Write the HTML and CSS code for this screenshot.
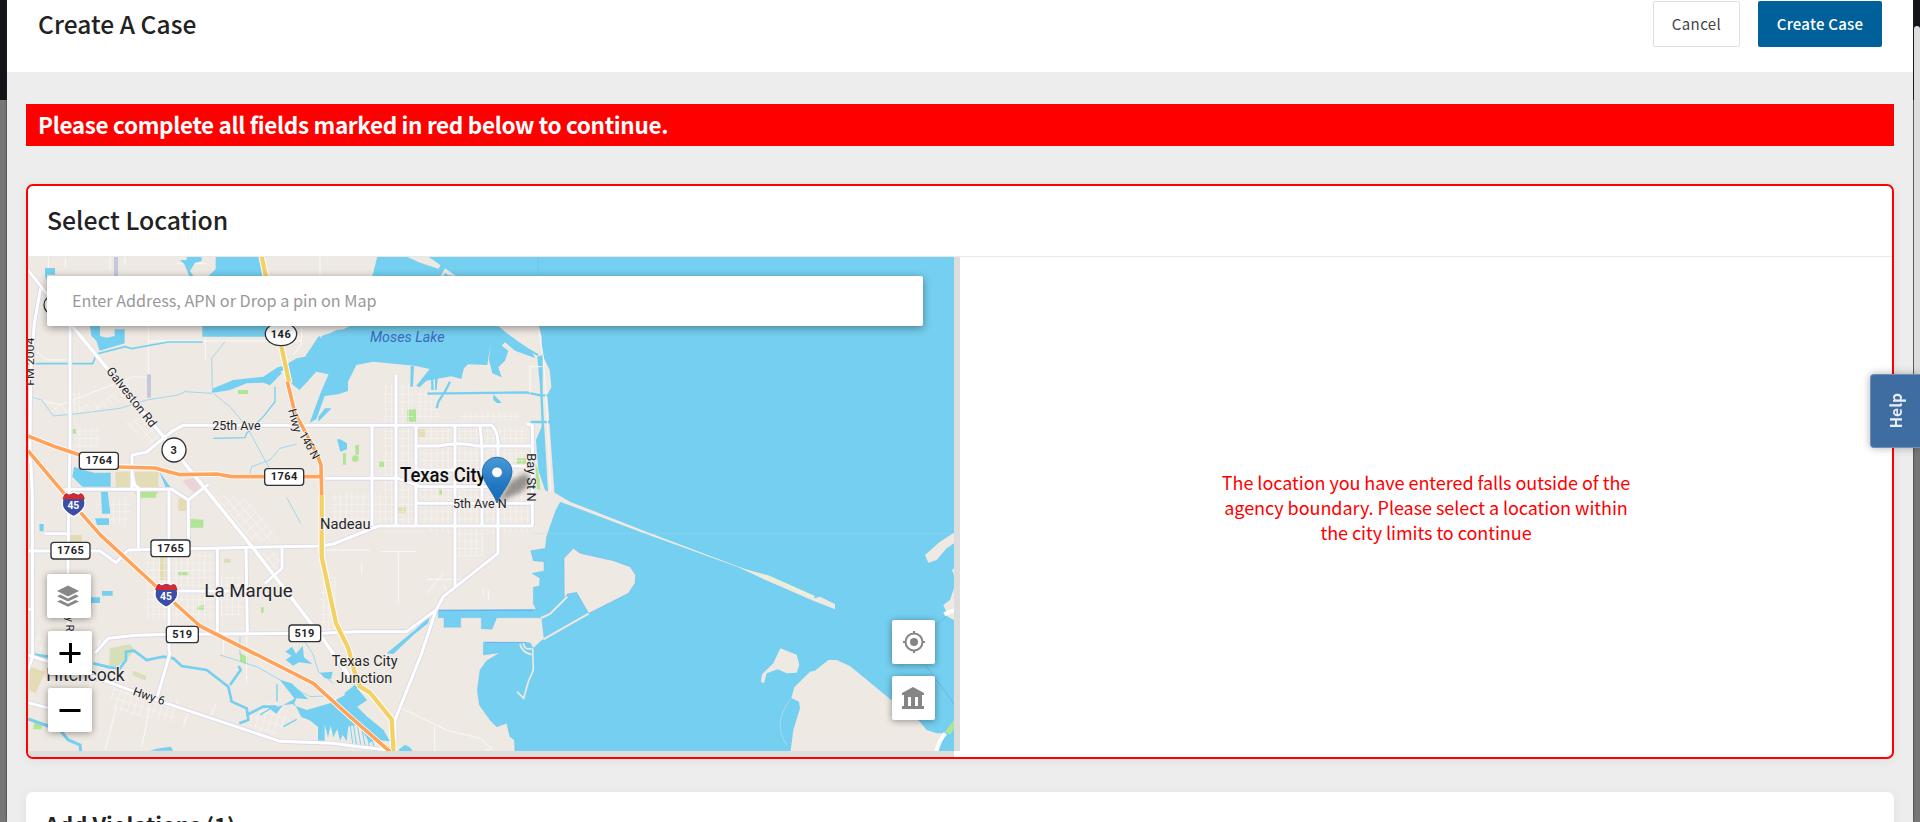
FILE: index.html
```html
<!DOCTYPE html>
<html lang="en">
<head>
<meta charset="utf-8">
<title>Create A Case</title>
<link rel="stylesheet" href="styles.css">
</head>
<body>
<div class="backdrop">
  <main class="modal">
    <header class="modal-header">
      <h1 class="modal-title">Create A Case</h1>
      <div class="actions">
        <button class="btn btn-cancel">Cancel</button>
        <button class="btn btn-primary">Create Case</button>
      </div>
    </header>
    <div class="content">
      <div class="banner">Please complete all fields marked in red below to continue.</div>
      <section class="card card-error">
        <h2 class="card-title">Select Location</h2>
        <div class="card-body">
          <div class="map-pane">
            <svg class="map" viewBox="28 257 926 494" width="926" height="494">
              <defs>
                <linearGradient id="pinFill" x1="0" y1="0" x2="0" y2="1"><stop offset="0" stop-color="#4a9ad6"/><stop offset=".6" stop-color="#2277c4"/><stop offset="1" stop-color="#176cba"/></linearGradient>
                <filter id="soft" x="-50%" y="-50%" width="200%" height="200%"><feGaussianBlur stdDeviation="8"/></filter>
                <pattern id="grid" width="17" height="22" patternUnits="userSpaceOnUse"><path d="M0 0H17M0 0V22" class="street"/></pattern>
                <pattern id="gridTilt" width="19" height="25" patternUnits="userSpaceOnUse" patternTransform="rotate(18)"><path d="M0 0H19M0 0V25" class="street"/></pattern>
                <pattern id="gridDiag" width="20" height="26" patternUnits="userSpaceOnUse" patternTransform="rotate(-40)"><path d="M0 0H20M0 0V26" class="street"/></pattern>
                <g id="roadsNorth">
                  <path d="M84 90L220 262L490 590L570 690L635 770L760 925L960 1185L1055 1318L1110 1360L1180 1440"/>
                  <path d="M122 145L103 250L92 400L90 620L97 760L98 1250"/>
                  <path d="M210 258V600L204 950V1230"/>
                  <path d="M396 745V645L440 636L515 575L548 556H1440L1475 556Q1494 575 1494 608V752"/>
                  <path d="M190 748H515L565 780L625 733M415 748V925M507 748V1230L510 1240L472 1370M396 700L404 735L420 748M565 780V925"/>
                  <path d="M84 933H300L348 968L385 930L960 918L1000 912L1135 858H1597V556L1580 552"/>
                  <path d="M1188 405V555V858M1116 555V858M1248 555V858M1365 555V1040M1440 556L1446 620V858M1248 618L1315 618Q1380 605 1430 618H1594M1494 678H1595M1248 790H1597M975 715H1195L1260 740H1480M1248 690H1370"/>
                  <path d="M1494 750V940L1330 1070L1308 1110L1285 1180L1265 1240L1185 1440V1500"/>
                  <path d="M1308 1110L1220 1175H1070L970 1180L518 1183L410 1186L325 1195L285 1240"/>
                  <path d="M84 1245L280 1310L500 1390L840 1504L1000 1510L1060 1518L1180 1532M84 1388L150 1405M98 1250L84 1290"/>
                  <path d="M652 925V1180M738 925L742 1180M846 920V985L795 1030M520 1053H740"/>
                  <path d="M84 1108H100M135 881H204"/>
                </g>
                <g id="orangeRoads">
                  <path d="M84 588L170 622L240 645M355 681L465 684L540 704L650 702L695 710H965M84 632L200 770L300 884L480 1050L600 1158L940 1330L1050 1430L1170 1535"/>
                  <path d="M862 425L885 520L910 565L950 640L963 675L965 765"/>
                </g>
                <g id="yellowRoads">
                  <path d="M784 45L800 120L842 310L868 430"/>
                  <path d="M965 765V950L1008 1150L1045 1225L1065 1300L1080 1340L1110 1358L1175 1438L1181 1540"/>
                </g>
              </defs>

              <rect x="28" y="257" width="926" height="494" fill="#efe9e3"/>
              <g transform="translate(0 240) scale(.33333)">
                <!-- parks and fields -->
                <g fill="#e3dcb5"><path d="M347 695h46v48h-46zM405 695h70v68h-70zM208 885h38v26h-38zM480 950h24v70h-24zM90 1280l45 15-28 65-20-10zM1252 567h26v24h-26zM1190 802h28v18h-28zM535 775h25v38h-25z"/></g>
                <g fill="#b1e495"><path d="M714 450h30v12h-30zM218 567h10v14h-10zM420 755h8v20h-8zM570 837l40 2v24h-40zM1222 508h26v37h-26zM1065 616l12-2v30h-10zM1029 640h9v34h-9zM1138 665h14v16h-14zM1550 655h28v16h-28zM1318 748h8v16h-8zM720 1240l22 10v24l-22-10zM590 1100l22-5v14h-20zM535 996h30v10h-30zM102 1450h26l-4 18h-24zM424 755h44v18h-44zM783 1102h8v16h-8z"/><circle cx="1066" cy="656" r="10"/></g>
                <path d="M330 1225l60-12 15 20-50 45-28 2zM400 1292l40 16-5 13-38-16zM672 956h20v12h-20z" fill="#d6dfb8"/>
                <path d="M548 722l30-8 30 22-25 22-14-10z" fill="#e9d5d5"/>
                <!-- local streets -->
                <g fill="url(#grid)">
                  <path d="M1150 430h90v425h-90zM1260 560h320v295h-320zM1250 450h70v90h-70zM1380 515h180v25h-180zM995 760h245v95h-245zM1290 795h300v85h-300zM440 940h200v200h-200zM660 1010h70v120h-70zM215 453h25v60h-25zM225 565h75v60h-75zM960 1010h50v170h-50zM290 775h100v80h-100zM1370 870h80v80h-80z"/>
                </g>
                <path d="M330 1330L540 1385L520 1450L330 1410zM100 1180l45 0 0 60-45-10zM750 1430l90-70 20 80-30 45-80-20z" fill="url(#gridTilt)"/>
                <path d="M370 545l70-15 45 75-45 5zM640 760l110 20 90 130-90-10zM770 940h80l-20 80zM140 490h150l90-50v30l-90 50H150z" fill="url(#gridDiag)"/>
                <g class="street" fill="none">
                  <path d="M145 50V85M196 50V82M330 50V90M375 50V75M530 70H620M715 50V108M445 258V410M445 303H905V258M616 258V360M110 335L140 360H210M100 475L180 495L400 410L450 412M960 50V108M670 1240V1180M740 1180V1330M250 1425L300 1200M315 1530L350 1400M425 1520L450 1400M550 1460L570 1400M630 1430L650 1390"/>
                  <path d="M980 930H1110M1085 970V1000M1195 935V1090M1140 935H1250M1280 1018H1390M1330 1000L1280 1060M1330 1035L1350 1070M1450 1045V1070M1465 1050V1080M960 1475H1000M1205 1405L1340 1470L1440 1495L1475 1525L1450 1535M1304 1458V1535M870 258L905 310L880 345"/>
                </g>
                <path d="M342 50h12v58h-12zM441 403h12v70h-12z" fill="#c5c8dd"/>
                <!-- inland water -->
                <g class="water">
                  <path d="M135 84h30v20h-24v20l-6-15zM270 258h30v30l20 5 24-5v-20h30v42l-75 22-10-30-15-15zM607 258h195v32H607zM647 50h130l10 58H625l22-20zM540 60h20v-9h45v12l-20 5-15 25 10 15h-12l-15-35zM222 680l30 10 30 8h50v42h-85l-30-30zM303 753h20l8 68h-25zM285 835h42v20h-36zM118 852h13v22h-12zM306 1053h32v14h-32zM262 1072h38v17h-38zM478 695l36 50h-16z"/>
                  <path d="M634 458L640 445L700 420L790 410L835 380L845 400L810 436L790 428L740 430L690 450L650 457zM865 370l25-15 25-5 20-30 20-30 35-10 50-24 30-2h420l30 25 75 55 10 20-60-22-30-25-10 10 20 15-10 30-20 20 10 30-28-12-10-40 5-50-10 65-58-2-12 12-8 32-30-8-75 13-20 20-10-5 40-50-45-10-125-12-50 10-25 50v28l-30 10-40 5-25 70-20 10 35-95 22-50-38-8-30 35-20 20-25-20-15-40-15 3-20-5z"/>
                  <path d="M1132 50h860v58H1117z"/>
                  <path d="M856 1235l20-15 12 22 20-25 4 35 25 20-40-5-18 10-22-18 18-12zM840 1320l35 10 50 48-35-3-10 20 40 15 70-20 50-28 35-5 15 25-20 17 30 30 50 40 20 35-50-5-10 10-35-55-30 5-5 45-12-20-8 18-8-35-12 25-8-35-8 35-10-38v52h-20v-45l-25-20-25-10-20-40-35 5-20 25-20-15 40-10 35-20zM960 1298l38-3-5 23-20-5zM1033 1360l30-24 25-10-15 20 28 35-35 23-25-30zM1160 1495l90-80 70-58 5 10-95 80-55 35z" display="none"/>
                  <path d="M856 1235l20-15 12 22 20-25 4 35 25 20-40-5-18 10-22-18 18-12zM840 1320l35 10 50 48-35-3-10 20 40 15 70-20 50-28 35-5 15 25-20 17 30 30 50 40 20 35-50-5-10 10-35-55-30 5-5 45-12-20-8 18-8-35-12 25-8-35-8 35-10-38v52h-20v-45l-25-20-25-10-20-40-35 5-20 25-20-15 40-10 35-20zM960 1298l38-3-5 23-20-5zM1033 1360l30-24 25-10-15 20 28 35-35 23-25-30zM1160 1240L1245 1170L1290 1128L1284 1150L1240 1185L1180 1242z"/>
                  <path d="M1011 598l10 0 20 12v18l-20 7zM1480 463l20 20 5 6-15 0-10-10zM1232 378h10l-3 62h-8zM1292 385h7l2 65h-7zM1305 395h10l-5 55h-5zM955 530l20-25 20 0-20 20-20 20zM450 1532l20-6 42-6 8 12zM1195 1530l20-16 15 8 12 18h-35z"/>
                </g>
                <g class="stream">
                  <path d="M106 371H278L290 342L375 320L395 326L505 306H608" stroke-width="5"/>
                  <path d="M98 473L125 480L160 528L240 520L360 505L440 480L535 465L555 455L635 460M640 460L690 500L740 560L810 688M890 612L840 625L810 660L755 680L750 700M675 305L635 355L637 450" stroke-width="2"/>
                  <path d="M825 440V485L790 530L740 580L735 593L640 595" stroke-width="4"/>
                  <path d="M100 1243L140 1250L190 1225M280 1270L330 1282L360 1285L378 1260L378 1235L402 1232L440 1260L490 1250L520 1255L545 1278L620 1290L685 1340L695 1385L740 1405L745 1440L718 1450M690 1335L722 1290L716 1278M740 1425L790 1400L830 1400" stroke-width="8"/>
                  <path d="M84 1437L180 1470L205 1500L240 1515L242 1533" stroke-width="9"/>
                  <path d="M660 1245L770 1280L930 1370L975 1368M720 1190L720 1245M860 772L902 850M915 1205L940 1245L955 1295L1000 1330" stroke-width="2"/>
                  <path d="M831 1333V1385M780 1425L820 1400M850 1460L890 1438" stroke-width="4"/>
                  <path d="M1282 461L1580 457L1620 466H1665M1310 505L1315 485L1335 455L1350 425M1592 546H1670M1500 280L1615 345" stroke-width="7"/>
                  <path d="M1050 1450l8 60M1060 1450l10 70M1072 1455l12 70M1084 1460l14 70M1098 1465l12 65M1112 1475l12 58" stroke-width="3"/>
                </g>
                <!-- bay -->
                <g transform="translate(960 0)">
                  <path class="water shore" d="M655 250L665 290L668 345L690 390L695 440L683 465L690 560L700 700L705 765L730 778L720 788L708 810L690 860L680 890L676 925L632 932L640 962L672 965V993L636 1000L660 1015L658 1038L640 1042V1090L648 1108L355 1110V1133H372V1162H422V1133H484V1166L516 1168L530 1133H665L672 1195L640 1225L630 1208L490 1207V1245L540 1238L500 1262L480 1290L472 1350L478 1395L510 1440L530 1460L560 1450L570 1490L583 1500L585 1540H1950V30H655V250z"/>
                  <path class="water" d="M652 350L668 345L668 460L672 550L684 755L675 750L655 690L648 600L665 560L660 440z"/>
                  <path d="M260 50L300 68L355 86L362 76L325 50zM362 108L375 85L408 108L385 105L375 98L370 108zM1 250h105l-35 18-30 3-15-13-25 38zM552 250h103l10 40-5 55-35-20-40-40-25-15z" fill="#efe9e3"/>
                  <path d="M646 670l8 20 8 60-12-4zM650 690l10 30-2 26z" fill="#b1e495"/>
                  <path d="M732 955L760 925L780 940L880 962L930 980L947 1005L945 1030L925 1060L806 1120L770 1057L742 1062L733 1075z" fill="#efe9e3" stroke="#6f9fe8" stroke-width="1"/>
                  <path d="M663 1134L690 1122L742 1070M670 1198L806 1121" fill="none" stroke="#efe9e3" stroke-width="6"/>
                  <path d="M690 750L750 785L960 868L1250 978L1340 1010L1485 1075L1500 1070L1545 1092V1108L1480 1082L1330 1017L1255 982L960 875L720 785z" fill="#efe9e3"/>
                  <path d="M1265 985L1345 1006L1485 1068L1480 1076L1345 1017z" fill="#eceed5"/>
                  <path d="M600 1212q5 25 35 32M610 1208q0 22 25 18M638 1225l2 65-15 35-14 50-20-20" fill="none" stroke="#efe9e3" stroke-width="5"/>
                  <path d="M1381 1225L1430 1244L1438 1275L1430 1298L1400 1300L1373 1288L1340 1300L1332 1330L1323 1325L1326 1303L1360 1270zM1411 1540L1420 1470L1440 1405L1437 1385L1414 1374L1423 1342L1470 1295L1485 1292L1525 1260L1550 1260L1590 1278L1710 1377L1800 1445L1820 1470L1850 1480H1876L1850 1540zM1815 945L1860 905L1902 878V910L1880 925L1850 960L1825 968zM1902 1045L1890 1080L1870 1095L1880 1118L1875 1125L1902 1140zM1896 990l6-5v20z" fill="#efe9e3"/>
                  <path d="M1875 1475L1902 1440V1465L1890 1484z" fill="#b1e495"/>
                  <path d="M1873 1123Q1885 1115 1905 1112M1848 1540Q1855 1505 1876 1480" fill="none" stroke="#fff" stroke-width="12"/>
                  <path d="M1412 1377Q1355 1450 1400 1514" fill="none" stroke="#c5ddE6" stroke-width="2"/>
                  <path d="M1820 1280L1902 1392M1840 1160L1880 1130" fill="none" stroke="#62a8e5" stroke-width="2"/>
                  <path d="M355 1111H640M495 1207H620" stroke="#5f9fe8" stroke-width="2"/>
                  <path d="M640 880H1902" stroke="#a6def4" stroke-width="1"/>
                  <path class="street" fill="none" d="M655 270L670 350L680 500L692 755M630 460V380H665"/>
                </g>
                <!-- roads -->
                <use href="#roadsNorth" class="road road-casing"/>
                <use href="#roadsNorth" class="road road-fill"/>
                <path d="M220 262L490 590L570 690L635 770L760 925L960 1185L1055 1318" class="road" stroke="#fff" stroke-width="10"/>
                <use href="#yellowRoads" class="road" stroke="#fff" stroke-width="19"/>
                <use href="#yellowRoads" class="road" stroke="#f2d264" stroke-width="13"/>
                <use href="#orangeRoads" class="road" stroke="#fff" stroke-width="16"/>
                <use href="#orangeRoads" class="road" stroke="#ffa35b" stroke-width="11"/>
                <path d="M842 310L868 430" stroke="#e5c75f" stroke-width="2"/>
                <!-- route shields -->
                <g class="shield">
                  <circle cx="522" cy="630" r="36"/><circle cx="160" cy="195" r="28"/><ellipse cx="843" cy="282" rx="47" ry="35"/>
                  <rect x="238" y="637" width="117" height="51" rx="9"/><rect x="794" y="686" width="117" height="50" rx="9"/>
                  <rect x="153" y="907" width="117" height="50" rx="9"/><rect x="453" y="900" width="117" height="50" rx="9"/>
                  <rect x="499" y="1159" width="96" height="49" rx="9"/><rect x="867" y="1155" width="95" height="50" rx="9"/>
                </g>
                <g class="shield-text">
                  <text x="522" y="641">3</text><text x="843" y="293">146</text><text x="297" y="672">1764</text><text x="853" y="721">1764</text><text x="212" y="942">1765</text><text x="512" y="935">1765</text><text x="547" y="1194">519</text><text x="914" y="1190">519</text>
                </g>
                <g id="interstate">
                  <path d="M191 766l8-8 8 4 14-5 14 5 8-4 8 8q7 22 2 34-8 18-32 30-26-12-33-30-3-14 3-34z" fill="#3c4da8" stroke="#fff" stroke-width="4"/>
                  <path d="M187 778l5-14 7-5 8 6 14-6 14 6 7-6 8 5 5 14z" fill="#cf2b33"/>
                  <text x="220" y="808" class="interstate-text">45</text>
                </g>
                <use href="#interstate" x="278" y="272"/>
                <!-- labels -->
                <g class="label">
                  <text x="637" y="570" font-size="37" textLength="145" lengthAdjust="spacingAndGlyphs">25th Ave</text>
                  <text x="1359" y="803" font-size="37" textLength="161" lengthAdjust="spacingAndGlyphs">5th Ave N</text>
                  <text x="960" y="867" font-size="43" textLength="152" lengthAdjust="spacingAndGlyphs">Nadeau</text>
                  <text x="613" y="1070" font-size="55" textLength="265" lengthAdjust="spacingAndGlyphs">La Marque</text>
                  <text x="139" y="1323" font-size="53" textLength="235" lengthAdjust="spacingAndGlyphs">Hitchcock</text>
                  <text x="995" y="1278" font-size="45" textLength="198" lengthAdjust="spacingAndGlyphs">Texas City</text>
                  <text x="1009" y="1329" font-size="45" textLength="168" lengthAdjust="spacingAndGlyphs">Junction</text>
                  <text x="1200" y="725" font-size="59" class="city" textLength="257" lengthAdjust="spacingAndGlyphs">Texas City</text>
                  <text x="1110" y="306" font-size="44" class="lake" textLength="224" lengthAdjust="spacingAndGlyphs">Moses Lake</text>
                  <text transform="translate(317 394) rotate(51.5)" font-size="37" textLength="218" lengthAdjust="spacingAndGlyphs">Galveston Rd</text>
                  <text transform="translate(103 437) rotate(-90)" font-size="33" textLength="144" lengthAdjust="spacingAndGlyphs">FM 2004</text>
                  <text transform="translate(864 510) rotate(75)" font-size="35" textLength="72" lengthAdjust="spacingAndGlyphs">Hwy</text>
                  <text transform="translate(896 584) rotate(60)" font-size="35" textLength="88" lengthAdjust="spacingAndGlyphs">146 N</text>
                  <text transform="translate(1581 640) rotate(90)" font-size="37" textLength="145" lengthAdjust="spacingAndGlyphs">Bay St N</text>
                  <text transform="translate(397 1364) rotate(19)" font-size="36" textLength="98" lengthAdjust="spacingAndGlyphs">Hwy 6</text>
                  <text transform="translate(198 1130) rotate(90)" font-size="33">y R</text>
                </g>
                <!-- marker -->
                <path d="M1493 788L1530 725L1575 700Q1605 720 1565 755z" opacity=".38" filter="url(#soft)"/>
                <path d="M1491 789C1482 760 1447 725 1447 695A44 43 0 0 1 1536 695C1536 725 1502 760 1491 789z" fill="url(#pinFill)" stroke="#2a6ea6" stroke-width="3"/>
                <circle cx="1491" cy="697" r="16" fill="#fff" stroke="#2f6fa5" stroke-width="2"/>
              </g>
            </svg>
            <input class="search" placeholder="Enter Address, APN or Drop a pin on Map">
            <div class="tools tools-left">
              <button class="tool tool-layers"><svg width="24" height="24" viewBox="0 0 24 24" fill="#888"><path d="M12 1.5L23 7 12 12.5 1 7zM1 12.3l3.5-1.7L12 14.4l7.5-3.8 3.5 1.7-11 5.3zM1 17.6l3.5-1.7 7.5 3.8 7.5-3.8 3.5 1.7-11 5.2z"/></svg></button>
              <button class="tool tool-zoom"><svg width="22" height="22" viewBox="0 0 22 22" stroke="#000" stroke-width="3"><path d="M.5 11.5h21M11.5 1v20"/></svg></button>
              <button class="tool tool-zoom"><svg width="22" height="22" viewBox="0 0 22 22" stroke="#000" stroke-width="3"><path d="M.5 11.5h21"/></svg></button>
            </div>
            <div class="tools tools-right">
              <button class="tool"><svg width="22" height="22" viewBox="0 0 22 22" fill="none" stroke="#858585" stroke-width="2"><circle cx="11" cy="11" r="8.5"/><circle cx="11" cy="11" r="4" fill="#858585" stroke="none"/><path d="M11 0v3M11 19v3M0 11h3M19 11h3"/></svg></button>
              <button class="tool tool-civic"><svg width="24" height="24" viewBox="0 0 24 24" fill="#858585"><path d="M12 1L23 7v2H1V7zM3 10h4v10H3zM10 10h4v10h-4zM17 10h4v10h-4zM1 20h22v3H1z"/><path d="M3 9h18v2H3z"/></svg></button>
            </div>
          </div>
          <div class="message-pane"><p class="message">The location you have entered falls outside of the<br>agency boundary. Please select a location within<br>the city limits to continue</p></div>
        </div>
      </section>
      <section class="card card-next"><h2 class="card-title">Add Violations (1)</h2></section>
    </div>
  </main>
  <div class="scroll-track"><div class="scroll-thumb"></div></div>
</div>
<button class="help"><span>Help</span></button>
</body>
</html>
```
FILE: styles.css
```css
* { box-sizing: border-box; }
body { margin: 0; height: 822px; overflow: hidden; font-family: "Noto Sans CJK SC", "Noto Sans", sans-serif; color: #222; }
button { font: inherit; border: 0; padding: 0; }
h1, h2, p { margin: 0; font-weight: 500; }
.backdrop { display: flex; height: 822px; padding-left: 7px; background: linear-gradient(#14141b 100px, #777 100px); }
.modal { display: flex; flex-direction: column; width: 1906px; height: 822px; background: #ededed; overflow: hidden; box-shadow: 0 0 2px #222; }
.modal-header { display: flex; flex: none; justify-content: space-between; align-items: flex-start; height: 72px; padding: 1px 31px 0 31px; background: #fff; }
.modal-title { font-size: 24.5px; line-height: 46px; letter-spacing: .05px; }
.actions { display: flex; gap: 18px; }
.btn { height: 46px; border-radius: 2px; font-size: 15px; line-height: 44px; }
.btn-cancel { width: 87px; background: #fff; border: 1px solid #e0e0e0; color: #444; letter-spacing: .4px; line-height: 42px; }
.btn-primary { width: 124px; background: #00619a; color: #fff; font-weight: 500; letter-spacing: .25px; }
.content { padding: 32px 19px 0; }
.banner { height: 42px; padding-left: 12px; background: #f00; color: #fff; font-size: 22.5px; font-weight: 700; line-height: 41px; letter-spacing: -.34px; white-space: nowrap; }
.card { background: #fff; border-radius: 7px; box-shadow: 0 2px 12px rgba(0,0,0,.06); }
.card-title { font-size: 24.8px; }
.card-error { margin-top: 38px; height: 575px; border: 2px solid #f00; overflow: hidden; }
.card-error .card-title { height: 71px; padding-left: 19px; line-height: 67px; border-bottom: 1px solid #e9e9e9; }
.card-body { display: flex; height: 500px; }
.map-pane { position: relative; flex: none; width: 932px; height: 500px; background: linear-gradient(#ddd, #ddd) 0 494px / 926px 6px no-repeat, linear-gradient(#ddd, #ddd) 926px 0 / 6px 494px no-repeat; }
.map { display: block; }
.street { stroke: #faf8f5; stroke-width: 3; }
.water { fill: #75cff0; }
.shore { stroke: #69b7ec; stroke-width: 1; }
.stream { fill: none; stroke: #75cff0; }
.road { fill: none; stroke-linejoin: round; }
.road-casing { stroke: #d9d9e9; stroke-width: 14; }
.road-fill { stroke: #fff; stroke-width: 9; }
.shield { fill: #fff; stroke: #303236; stroke-width: 4; }
.shield-text { font: 700 33px Roboto, sans-serif; letter-spacing: 1.5px; text-anchor: middle; fill: #1f2327; }
.interstate-text { font: 700 31px Roboto, sans-serif; text-anchor: middle; fill: #fff; }
.label { font-family: Roboto, sans-serif; fill: #24262a; stroke: #f4f0ed; stroke-width: 5; paint-order: stroke; }
.city { font-weight: 500; fill: #0d0e10; }
.lake { font-style: italic; fill: #4068bb; stroke: none; }
.search { position: absolute; left: 19px; top: 19px; width: 876px; height: 50px; padding: 0 26px 2px 25px; border: 0; border-radius: 2px; background: #fff; box-shadow: 0 2px 8px rgba(0,0,0,.4); font: 16.2px "Noto Sans CJK SC", sans-serif; }
.search::placeholder { color: #999; opacity: 1; }
.tools { position: absolute; display: flex; flex-direction: column; gap: 13px; }
.tools-left { left: 19px; top: 317px; }
.tools-right { right: 25px; top: 363px; gap: 12px; }
.tool { display: flex; align-items: center; justify-content: center; width: 44px; height: 44px; border-radius: 2px; background: #fff; box-shadow: 0 1px 7px rgba(0,0,0,.4); }
.tool-layers { padding-right: 2px; }
.tool-zoom { margin-left: 1px; }
.tools-right .tool { width: 43px; }
.tool-civic { padding-right: 2px; }
.message-pane { display: flex; flex: 1; align-items: center; justify-content: center; }
.message { color: #f00; font-size: 18px; font-weight: 400; line-height: 25px; letter-spacing: -.05px; text-align: center; white-space: nowrap; }
.card-next { margin-top: 33px; height: 120px; padding: 16px 19px; }
.card-next .card-title { font-size: 22px; font-weight: 700; }
.scroll-track { flex: 1; padding: 26px 0 0 1px; }
.scroll-thumb { height: 422px; border-radius: 4px 4px 0 0; background: #ddd; }
.help { position: absolute; right: 0; top: 374px; display: flex; align-items: center; justify-content: center; width: 50px; height: 74px; border: 1px solid #6d8fb8; border-right: 0; border-radius: 4px 0 0 4px; background: #3f6ca1; box-shadow: 0 0 8px rgba(0,0,0,.3); color: #e9eef5; }
.help span { padding-left: 2px; writing-mode: vertical-rl; transform: rotate(180deg); font-size: 15.5px; font-weight: 700; }
```
